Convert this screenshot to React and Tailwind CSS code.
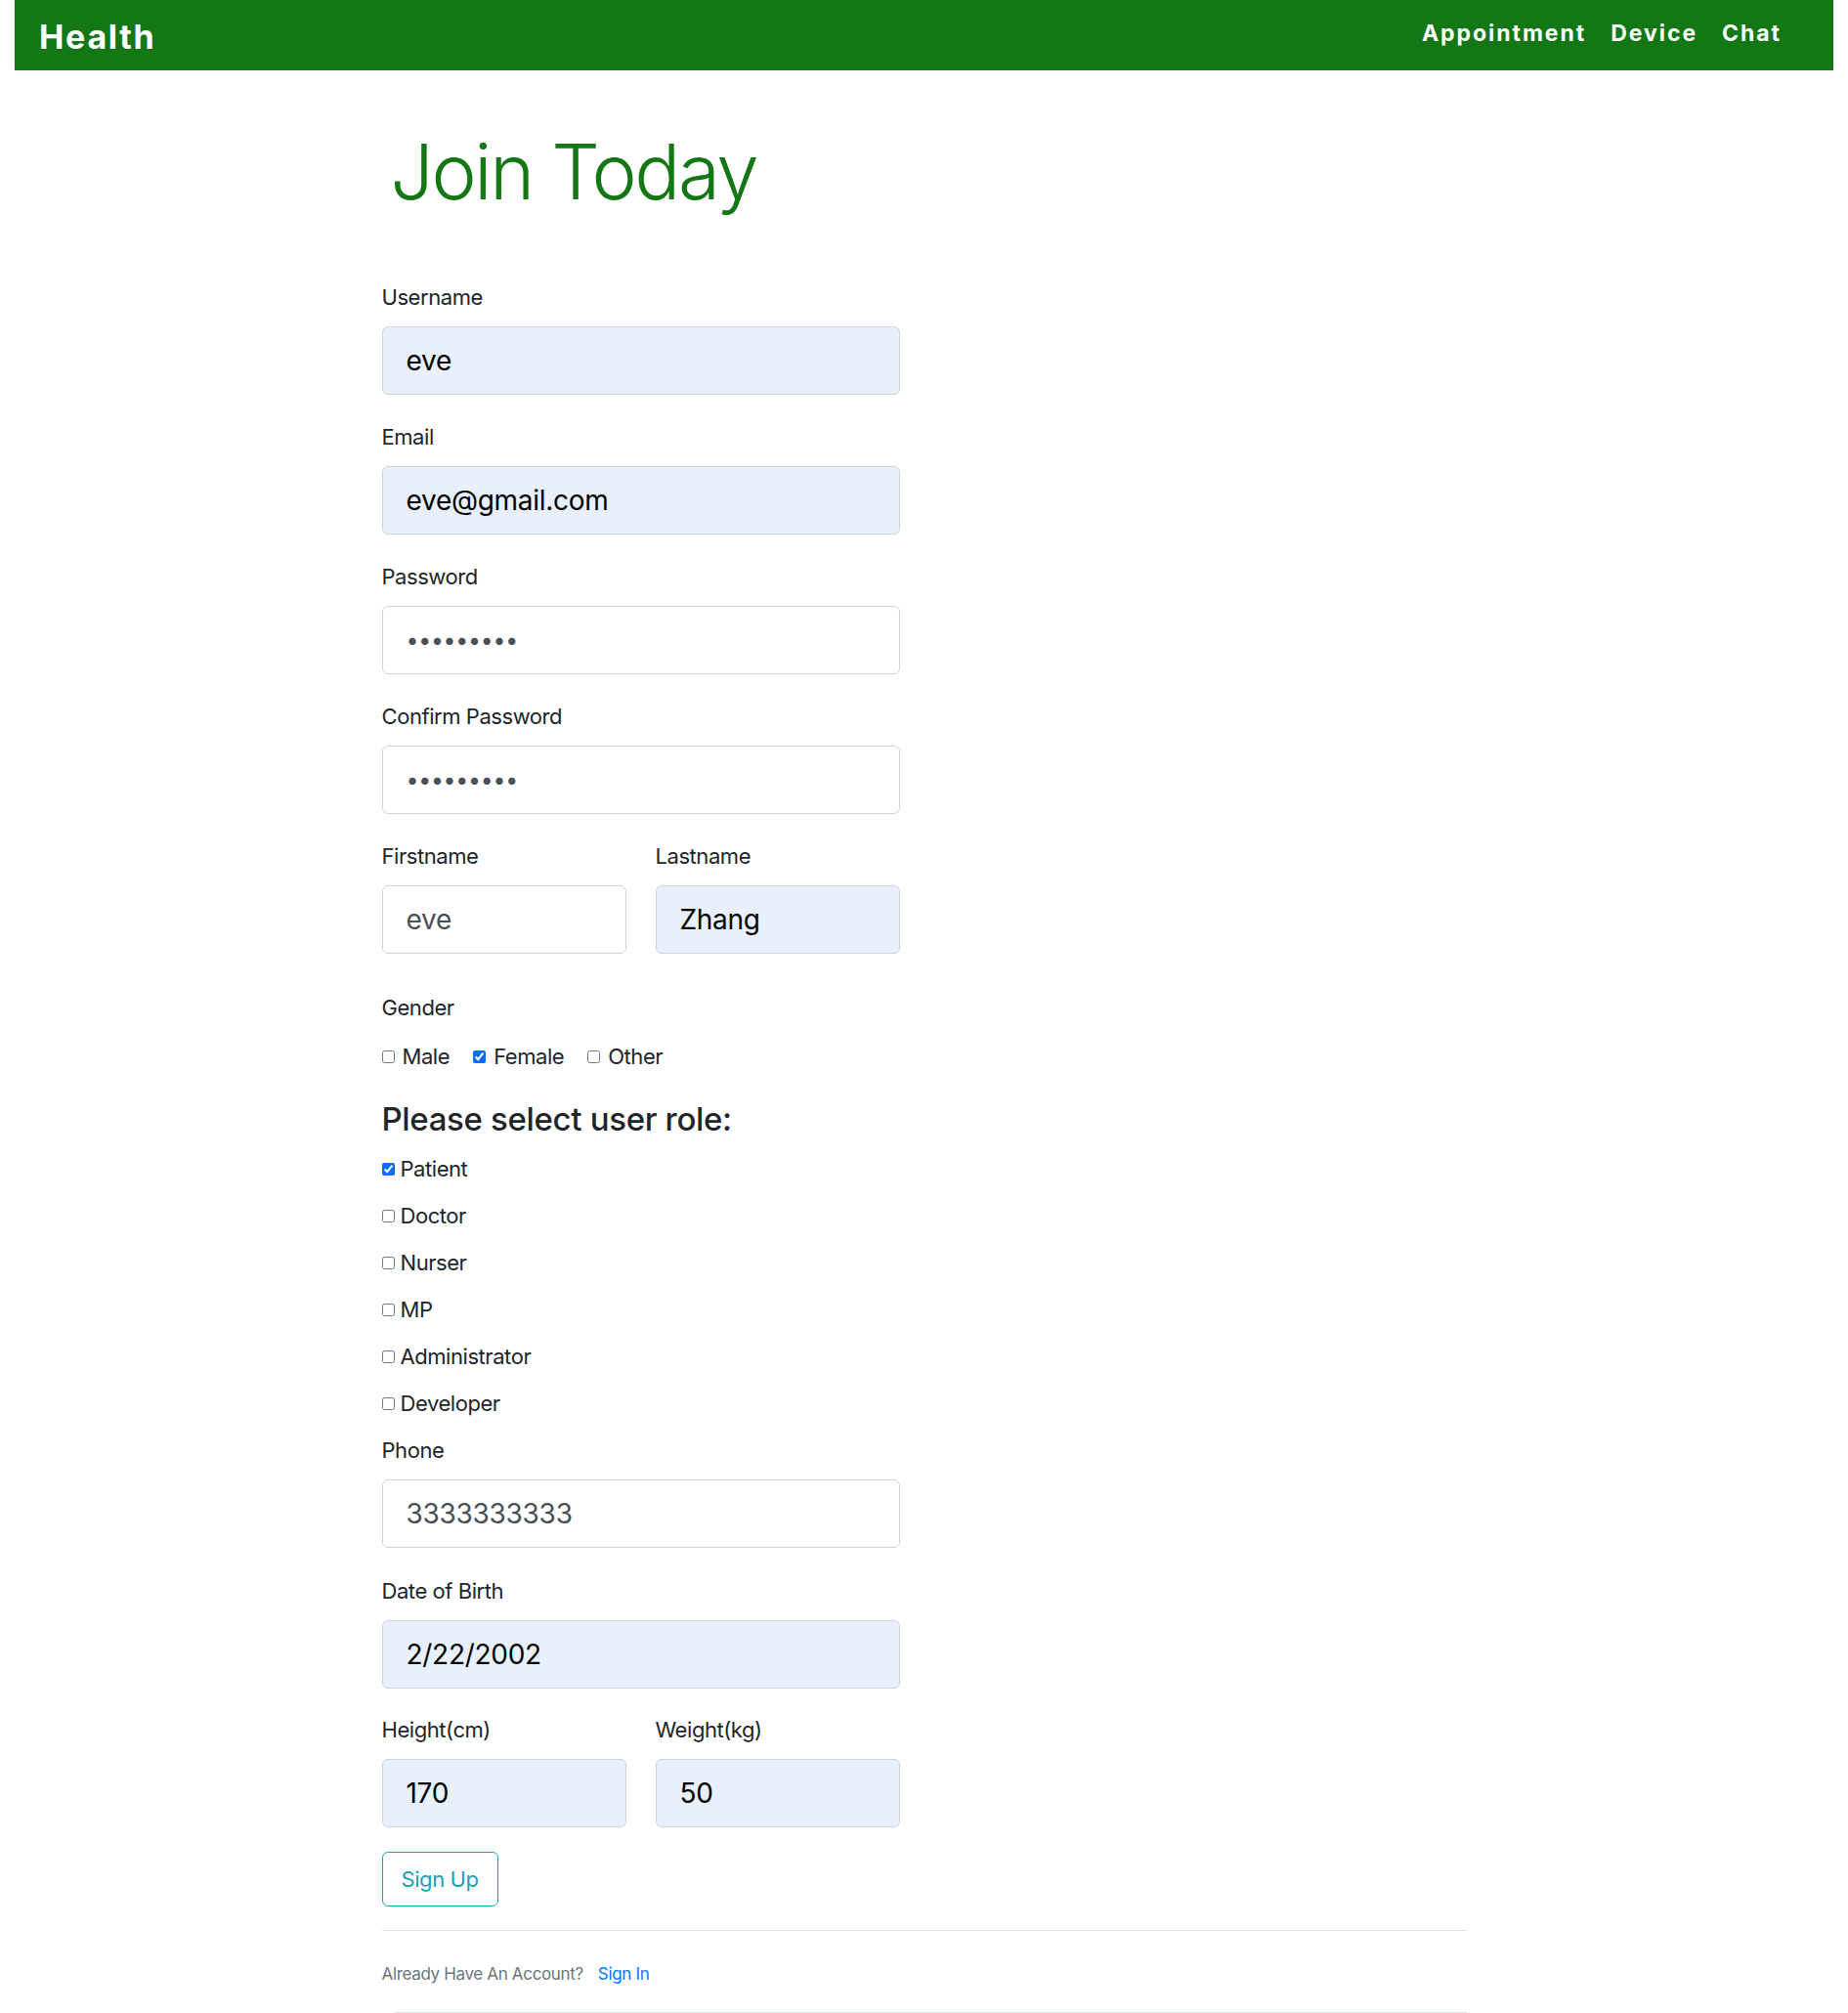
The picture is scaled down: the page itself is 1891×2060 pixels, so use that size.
import React from "react";

const Label = ({ children, className = "" }) => (
  <label className={`block text-[22px] leading-[26px] tracking-[-0.02em] text-[#212529] ${className}`}>
    {children}
  </label>
);

const Field = ({ value, type = "text", filled = false, className = "" }) => (
  <input
    type={type}
    value={value}
    readOnly
    className={`mt-[17px] block h-[70px] w-full rounded-[6px] border border-[#ced4da] pl-[24px] pr-3 tracking-[-0.01em] outline-none ${
      type === "password" ? "text-[23px]" : "text-[28px]"
    } ${filled ? "bg-[#e8f0fe] text-black" : "bg-white text-[#495057]"} ${className}`}
  />
);

const Check = ({ checked = false }) => (
  <input
    type="checkbox"
    checked={checked}
    readOnly
    className="m-0 h-[13px] w-[13px] accent-[#0a6cff]"
  />
);

export default function App() {
  const roles = ["Patient", "Doctor", "Nurser", "MP", "Administrator", "Developer"];
  return (
    <div className="min-h-[2060px] bg-white font-['Inter','Liberation_Sans',sans-serif]">
      <nav className="mx-[15px] flex h-[72px] items-center justify-between bg-[#127714] pl-[25px] pr-[53px]">
        <span className="mt-[3px] text-[34px] font-bold leading-none tracking-[0.05em] text-white">Health</span>
        <div className="mb-[4px] flex items-center gap-[25px] text-[23px] font-bold leading-none tracking-[0.085em] text-white">
          <span>Appointment</span>
          <span>Device</span>
          <span>Chat</span>
        </div>
      </nav>

      <main className="mx-auto w-[1140px] px-[15px]">
        <h1 className="mt-[65px] pl-[9px] text-[78px] font-light leading-[78px] tracking-[-0.03em] text-[#127714]">
          Join Today
        </h1>

        <form className="mt-[76px] w-[530px]">
          <Label>Username</Label>
          <Field value="eve" filled />

          <Label className="mt-[30px]">Email</Label>
          <Field value="eve@gmail.com" filled />

          <Label className="mt-[30px]">Password</Label>
          <Field value="123456789" type="password" />

          <Label className="mt-[30px]">Confirm Password</Label>
          <Field value="123456789" type="password" />

          <div className="mt-[30px] grid grid-cols-2 gap-[30px]">
            <div>
              <Label>Firstname</Label>
              <Field value="eve" />
            </div>
            <div>
              <Label>Lastname</Label>
              <Field value="Zhang" filled />
            </div>
          </div>

          <Label className="mt-[42px]">Gender</Label>
          <div className="mt-[24px] flex h-[26px] items-center gap-[24px] text-[22px] leading-[26px] tracking-[-0.02em] text-[#212529]">
            <span className="flex items-center gap-[8px]">
              <Check />
              Male
            </span>
            <span className="flex items-center gap-[8px]">
              <Check checked />
              Female
            </span>
            <span className="flex items-center gap-[8px]">
              <Check />
              Other
            </span>
          </div>

          <h3 className="mt-[31px] text-[33px] font-medium leading-[40px] tracking-[-0.01em] text-[#212529]">
            Please select user role:
          </h3>

          <div className="mt-[18px] flex flex-col gap-[22px]">
            {roles.map((r, i) => (
              <div
                key={r}
                className="flex h-[26px] items-center gap-[6px] text-[22px] leading-[26px] tracking-[-0.02em] text-[#212529]"
              >
                <Check checked={i === 0} />
                {r}
              </div>
            ))}
          </div>

          <Label className="mt-[22px]">Phone</Label>
          <Field value="3333333333" />

          <Label className="mt-[31px]">Date of Birth</Label>
          <Field value="2/22/2002" filled />

          <div className="mt-[29px] grid grid-cols-2 gap-[30px]">
            <div>
              <Label>Height(cm)</Label>
              <Field value="170" filled />
            </div>
            <div>
              <Label>Weight(kg)</Label>
              <Field value="50" filled />
            </div>
          </div>

          <button
            type="button"
            className="mt-[25px] h-[56px] w-[119px] rounded-[6px] border border-[#17a2b8] bg-white text-[22px] tracking-[-0.02em] text-[#17a2b8]"
          >
            Sign Up
          </button>
        </form>

        <div className="mt-[24px] border-t border-[#dee2e6]" />

        <div className="mt-[32px] flex h-[24px] items-center gap-[15px] text-[17px] leading-[24px] tracking-[-0.02em]">
          <span className="text-[#6c757d]">Already Have An Account?</span>
          <a href="#" className="text-[#007bff]">Sign In</a>
        </div>

        <div className="ml-[13px] mt-[27px] border-t border-[#dee2e6]" />
      </main>
    </div>
  );
}
